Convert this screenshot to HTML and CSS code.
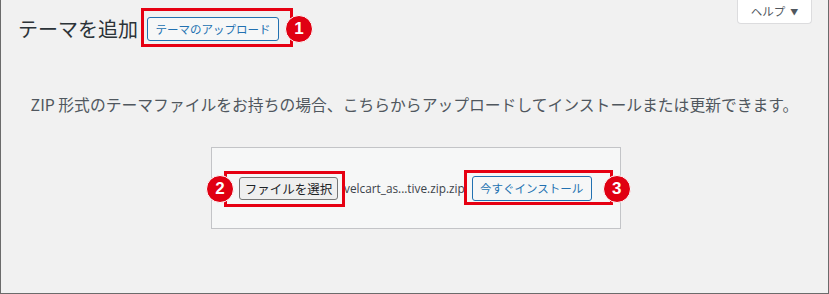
FILE: index.html
```html
<!DOCTYPE html>
<html lang="ja">
<head>
    <meta charset="UTF-8" />
    <title>テーマを追加</title>
    <link rel="stylesheet" href="styles.css">
</head>
<body>
    <div id="page">
        <div class="help-tab">ヘルプ<span class="arrow">▼</span></div>

        <div class="header">
            <h1>テーマを追加</h1>
            <span class="mark">
                <button class="btn-outline btn-upload">テーマのアップロード</button>
                <span class="frame frame-1"></span>
                <span class="badge badge-1">1</span>
            </span>
        </div>

        <p class="desc">ZIP 形式のテーマファイルをお持ちの場合、こちらからアップロードしてインストールまたは更新できます。</p>

        <div class="upload-box">
            <span class="mark">
                <button class="btn-file">ファイルを選択</button>
                <span class="frame frame-2"></span>
                <span class="badge badge-2">2</span>
            </span>
            <span class="filename">velcart_as...tive.zip.zip</span>
            <span class="mark">
                <button class="btn-outline btn-install">今すぐインストール</button>
                <span class="frame frame-3"></span>
                <span class="badge badge-3">3</span>
            </span>
        </div>
    </div>
</body>
</html>
```

FILE: styles.css
```css
body{
    margin: 0;
    background: #f1f1f1;
    font-family: "Noto Sans CJK JP", "Noto Sans", sans-serif;
    color: #3c434a;
}
#page{
    position: relative;
    width: 829px;
    height: 294px;
    box-sizing: border-box;
    border: 1px solid #6b6b6b;
    border-top: none;
    padding: 16px 0 0 17px;
}
.help-tab{
    position: absolute;
    top: 0;
    right: 16px;
    width: 75px;
    height: 24px;
    box-sizing: border-box;
    background: #fff;
    border: 1px solid #dcdcde;
    border-top: none;
    border-radius: 0 0 4px 4px;
    font-size: 11.5px;
    line-height: 22px;
    color: #50575e;
    text-align: center;
}
.help-tab .arrow{
    margin-left: 5px;
    font-size: 8px;
    vertical-align: 1px;
}
.header{
    display: flex;
    align-items: center;
    gap: 9px;
    height: 25px;
}
h1{
    margin: 0;
    font-size: 20px;
    font-weight: 400;
    line-height: 25px;
    color: #2c3338;
}
.mark{
    position: relative;
    display: inline-flex;
}
button{
    font-family: inherit;
    margin: 0;
    cursor: pointer;
}
.btn-outline{
    background: #f6f7f7;
    border: 1px solid #2271b1;
    border-radius: 3px;
    color: #2271b1;
    font-size: 11.5px;
    padding: 0;
}
.btn-upload{
    width: 132px;
    height: 24px;
}
.btn-install{
    width: 120px;
    height: 25px;
}
.btn-file{
    width: 99px;
    height: 23px;
    padding: 0;
    background: #efefef;
    border: 1px solid #767676;
    border-radius: 3px;
    color: #1d2327;
    font-size: 12.5px;
}
.frame{
    position: absolute;
    border: 3px solid #e60012;
    pointer-events: none;
}
.frame-1{
    left: -6px;
    right: -14px;
    top: -9px;
    bottom: -6px;
}
.frame-2{
    left: -15px;
    right: -7px;
    top: -6px;
    bottom: -7px;
}
.frame-3{
    left: -8px;
    right: -21px;
    top: -6px;
    bottom: -4px;
}
.badge{
    position: absolute;
    width: 28px;
    height: 28px;
    box-sizing: border-box;
    border-radius: 50%;
    background: #e00012;
    border: 1px solid #fff;
    color: #fff;
    font-family: "Liberation Sans", Arial, sans-serif;
    font-weight: 700;
    font-size: 17px;
    line-height: 26px;
    text-align: center;
}
.badge-1{
    left: 138px;
    top: -2px;
}
.badge-2{
    left: -33px;
    top: -2px;
}
.badge-3{
    left: 131px;
    top: -1px;
}
.desc{
    margin: 54px 0 0 -17px;
    text-align: center;
    font-size: 15.8px;
    line-height: 20px;
    color: #50575e;
}
.upload-box{
    display: flex;
    align-items: center;
    width: 410px;
    height: 82px;
    box-sizing: border-box;
    margin: 32px 0 0 193px;
    padding: 0 0 0 27px;
    background: #f6f7f7;
    border: 1px solid #c3c4c7;
}
.filename{
    margin: 0 7px 0 6px;
    font-family: "Open Sans", "Noto Sans", sans-serif;
    font-size: 11.8px;
    color: #3c434a;
}
```
